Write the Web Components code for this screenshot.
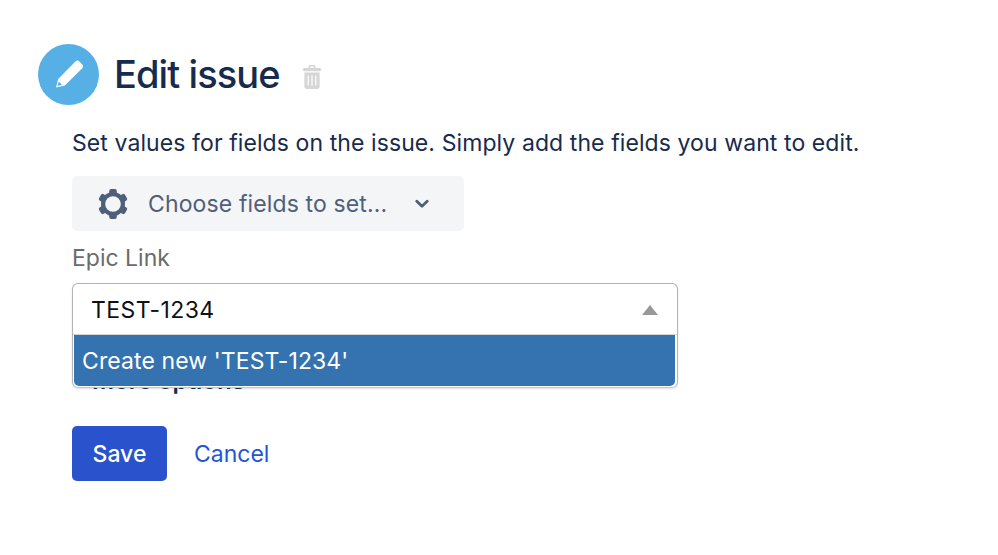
<!DOCTYPE html>
<html>
<head>
<meta charset="utf-8">
<title>Edit issue</title>
<style>
  html, body { margin: 0; background: #fff; }
  body { font-family: Inter, "Liberation Sans", sans-serif; color: #172b4d; overflow: hidden; }
</style>
</head>
<body>
<edit-form></edit-form>

<script>
class IssueHeader extends HTMLElement {
    constructor(){
        super();
        this.attachShadow({ mode: 'open' });
        this.shadowRoot.innerHTML = `
            <style>
                :host { display: flex; align-items: center; height: 61px; }
                .circle { width: 61px; height: 61px; flex: none; }
                h1 { margin: 0 0 0 15px; font-size: 38px; font-weight: 550; line-height: 61px; letter-spacing: -0.9px; color: #172b4d; }
                .trash { width: 20px; height: 26px; margin-left: 22px; margin-top: 5px; flex: none; }
            </style>
            <svg class="circle" viewBox="0 0 61 61">
                <circle cx="30.5" cy="30.5" r="30.5" fill="#57b0e5"/>
                <path d="M18 43.6 L20.2 35 L37.4 17.4 C38.5 16.3 40.2 16.3 41.3 17.4 L44.3 20.4 C45.4 21.5 45.4 23.2 44.3 24.3 L26.8 41.6 Z" fill="#fff"/>
                <path d="M19.5 42 L20.8 37.6 L24 40.8 Z" fill="#57b0e5"/>
            </svg>
            <h1><slot></slot></h1>
            <svg class="trash" viewBox="0 0 20 26">
                <path d="M6.5 4 V2.6 C6.5 1.7 7.2 1 8.1 1 H11.9 C12.8 1 13.5 1.7 13.5 2.6 V4 H11.9 V2.6 H8.1 V4 Z" fill="#d6d6d6"/>
                <rect x="1" y="4" width="18" height="3.2" rx="1.2" fill="#d6d6d6"/>
                <path d="M2.4 8.4 H17.6 V22.6 C17.6 24 16.6 25 15.2 25 H4.8 C3.4 25 2.4 24 2.4 22.6 Z" fill="#d6d6d6"/>
                <path d="M6.2 11.5 V21.5 M10 11.5 V21.5 M13.8 11.5 V21.5" stroke="#fff" stroke-width="1.5" opacity=".8"/>
            </svg>
        `;
    }
}

class FieldChooser extends HTMLElement {
    constructor(){
        super();
        this.attachShadow({ mode: 'open' });
        this.shadowRoot.innerHTML = `
            <style>
                :host { display: flex; align-items: center; width: 392px; height: 55px; box-sizing: border-box; padding-left: 25px; background: #f4f5f7; border-radius: 5px; color: #505f79; font-size: 23px; }
                .gear { width: 32px; height: 32px; flex: none; }
                span { margin-left: 19px; white-space: nowrap; letter-spacing: .13px; }
                .chev { width: 14px; height: 10px; margin-left: 28px; flex: none; }
            </style>
            <svg class="gear" viewBox="0 0 32 32">
                <g fill="#505f79">
                    <rect x="12.2" y="1" width="7.6" height="30" rx="2"/>
                    <rect x="12.2" y="1" width="7.6" height="30" rx="2" transform="rotate(60 16 16)"/>
                    <rect x="12.2" y="1" width="7.6" height="30" rx="2" transform="rotate(120 16 16)"/>
                    <circle cx="16" cy="16" r="12"/>
                </g>
                <circle cx="16" cy="16" r="7.8" fill="#f4f5f7"/>
            </svg>
            <span><slot></slot></span>
            <svg class="chev" viewBox="0 0 14 10">
                <path d="M1.8 2.2 L7 7.2 L12.2 2.2" fill="none" stroke="#505f79" stroke-width="2.8" stroke-linecap="round" stroke-linejoin="round"/>
            </svg>
        `;
    }
}

class ComboBox extends HTMLElement {
    constructor(){
        super();
        this.attachShadow({ mode: 'open' });
        this.shadowRoot.innerHTML = `
            <style>
                :host { display: block; position: absolute; left: 0; top: 0; width: 606px; height: 105px; box-sizing: border-box; background: #fff; border: 1px solid #b4b4b4; border-bottom-color: #c8c8c8; border-radius: 6px; box-shadow: 0 1px 2px rgba(0,0,0,.12); }
                .input { display: flex; align-items: center; justify-content: space-between; box-sizing: border-box; height: 51px; padding: 2px 19px 0 18px; font-size: 23px; color: #111; border-bottom: 1px solid #d4d4d4; letter-spacing: .45px; }
                .caret { width: 0; height: 0; border-left: 8.5px solid transparent; border-right: 8.5px solid transparent; border-bottom: 10px solid #999; margin-top: -1px; }
                .option { height: 51px; line-height: 53px; margin: 0 2px 0 1px; padding-left: 8px; background: #3572b0; color: #fff; font-size: 23px; letter-spacing: .1px; border-radius: 0 0 5px 5px; }
            </style>
            <div class="input"><span><slot name="value"></slot></span><i class="caret"></i></div>
            <div class="option"><slot name="option"></slot></div>
        `;
    }
}

class EditForm extends HTMLElement {
    constructor(){
        super();
        this.attachShadow({ mode: 'open' });
        this.shadowRoot.innerHTML = `
            <style>
                :host { display: block; padding: 44px 0 0 38px; font-size: 23px; color: #172b4d; }
                .body { padding-left: 34px; }
                p { margin: 23px 0 18px; font-size: 23px; line-height: 30px; letter-spacing: .09px; white-space: nowrap; }
                .label { margin-top: 12px; height: 29px; line-height: 30px; color: #6b6b6b; font-size: 23px; }
                .field { position: relative; height: 105px; margin-top: 11px; }
                .more { position: absolute; left: 20px; top: 83px; line-height: 30px; font-size: 24px; font-weight: 600; color: #172b4d; }
                .actions { display: flex; align-items: center; margin-top: 38px; }
                button { width: 95px; height: 55px; border: 0; border-radius: 5px; background: #2a52cc; color: #fff; font: 500 23px Inter, "Liberation Sans", sans-serif; padding: 0; }
                a { margin-left: 27px; color: #1f56d6; text-decoration: none; font-size: 23px; }
            </style>
            <issue-header>Edit issue</issue-header>
            <div class="body">
                <p>Set values for fields on the issue. Simply add the fields you want to edit.</p>
                <field-chooser>Choose fields to set...</field-chooser>
                <div class="label">Epic Link</div>
                <div class="field">
                    <div class="more">More options</div>
                    <combo-box>
                        <span slot="value">TEST-1234</span>
                        <span slot="option">Create new 'TEST-1234'</span>
                    </combo-box>
                </div>
                <div class="actions">
                    <button>Save</button>
                    <a href="#">Cancel</a>
                </div>
            </div>
        `;
    }
}

customElements.define('issue-header', IssueHeader);
customElements.define('field-chooser', FieldChooser);
customElements.define('combo-box', ComboBox);
customElements.define('edit-form', EditForm);
</script>
</body>
</html>
